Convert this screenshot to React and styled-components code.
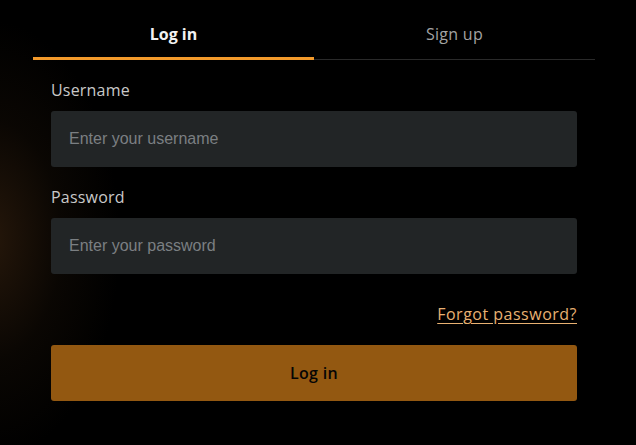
import React from "react";
import styled, { createGlobalStyle } from "styled-components";

const Global = createGlobalStyle`
  html, body {
    margin: 0;
    padding: 0;
    background: #000;
  }
  body {
    min-height: 445px;
    background:
      radial-gradient(ellipse 130px 220px at -10px 240px, rgba(44, 27, 12, 0.85), rgba(22, 14, 6, 0.45) 55%, rgba(0,0,0,0) 100%),
      #000;
    font-family: "Open Sans", "Liberation Sans", sans-serif;
  }
`;

const Page = styled.div`
  padding: 0 41px 0 33px;
  min-height: 445px;
  box-sizing: border-box;
`;

const TabsRow = styled.div`
  display: flex;
  border-bottom: 1px solid #2a2a2a;
  height: 59px;
`;

const Tab = styled.button`
  flex: 1;
  background: none;
  border: none;
  margin: 0 0 ${(p) => (p.$active ? "-1px" : "0")};
  padding: 24px 0 0;
  height: ${(p) => (p.$active ? "60px" : "59px")};
  box-sizing: border-box;
  border-bottom: ${(p) => (p.$active ? "3px solid #f39a2b" : "none")};
  font-family: "Open Sans", "Liberation Sans", sans-serif;
  font-size: 16px;
  line-height: 20px;
  font-weight: ${(p) => (p.$active ? 700 : 400)};
  color: ${(p) => (p.$active ? "#f2f2f2" : "#a3a3a3")};
  letter-spacing: ${(p) => (p.$active ? "0" : "0.3px")};
  display: flex;
  justify-content: center;
  align-items: flex-start;
  cursor: pointer;
`;

const Form = styled.form`
  display: flex;
  flex-direction: column;
  padding: 19px 18px 0;
`;

const Field = styled.div`
  display: flex;
  flex-direction: column;
  margin-bottom: ${(p) => p.$gap || "0"};
`;

const Label = styled.label`
  font-size: 16px;
  line-height: 22px;
  color: #c9c9c9;
  letter-spacing: 0.2px;
  margin-bottom: 10px;
`;

const Input = styled.input`
  height: 56px;
  box-sizing: border-box;
  background: #222526;
  border: none;
  border-radius: 3px;
  padding: 0 18px;
  font-family: "Liberation Sans", Arial, sans-serif;
  font-size: 16px;
  color: #e0e0e0;
  outline: none;
  &::placeholder {
    color: #7b7f82;
  }
`;

const ForgotRow = styled.div`
  display: flex;
  justify-content: flex-end;
  margin-top: 29px;
`;

const Forgot = styled.a`
  font-size: 16px;
  line-height: 22px;
  letter-spacing: 0.5px;
  color: #e8b172;
  text-decoration: underline;
  text-underline-offset: 3px;
  cursor: pointer;
`;

const Submit = styled.button`
  margin-top: 20px;
  height: 56px;
  border: none;
  border-radius: 3px;
  background: #935811;
  color: #050505;
  font-family: "Open Sans", "Liberation Sans", sans-serif;
  font-size: 16px;
  font-weight: 600;
  letter-spacing: 0.3px;
  cursor: pointer;
`;

export default function App() {
  return (
    <>
      <Global />
      <Page>
        <TabsRow>
          <Tab $active>Log in</Tab>
          <Tab>Sign up</Tab>
        </TabsRow>
        <Form onSubmit={(e) => e.preventDefault()}>
          <Field $gap="19px">
            <Label>Username</Label>
            <Input placeholder="Enter your username" />
          </Field>
          <Field>
            <Label>Password</Label>
            <Input type="password" placeholder="Enter your password" />
          </Field>
          <ForgotRow>
            <Forgot>Forgot password?</Forgot>
          </ForgotRow>
          <Submit type="submit">Log in</Submit>
        </Form>
      </Page>
    </>
  );
}
